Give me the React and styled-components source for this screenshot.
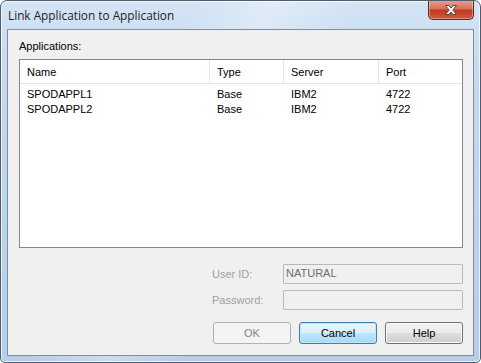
import { styled, createGlobalStyle } from 'styled-components';

const GlobalStyle = createGlobalStyle`
  html, body {
    margin: 0;
    padding: 0;
    background: #ffffff;
  }
  * {
    box-sizing: border-box;
  }
`;

const columns = [
  { key: 'name', label: 'Name', width: 190 },
  { key: 'type', label: 'Type', width: 74 },
  { key: 'server', label: 'Server', width: 95 },
  { key: 'port', label: 'Port', width: 0 },
];

const rows = [
  { name: 'SPODAPPL1', type: 'Base', server: 'IBM2', port: '4722' },
  { name: 'SPODAPPL2', type: 'Base', server: 'IBM2', port: '4722' },
];

const App = () => {
  return (
    <>
      <GlobalStyle />
      <Window>
        <TitleBar>
          <Title>Link Application to Application</Title>
          <CloseButton>
            <svg width="16" height="12" viewBox="0 0 16 12">
              <path
                d="M2.5 1.5 L6 1.5 L8 4 L10 1.5 L13.5 1.5 L9.8 6 L13.5 10.5 L10 10.5 L8 8 L6 10.5 L2.5 10.5 L6.2 6 Z"
                fill="#ffffff"
                stroke="#5b4a48"
                strokeWidth="1"
                strokeLinejoin="round"
              />
            </svg>
          </CloseButton>
        </TitleBar>
        <Client>
          <Label>Applications:</Label>
          <ListView>
            <HeaderRow>
              {columns.map((c) => (
                <HeaderCell key={c.key} width={c.width}>
                  {c.label}
                </HeaderCell>
              ))}
            </HeaderRow>
            <Body>
              {rows.map((r) => (
                <Row key={r.name}>
                  {columns.map((c) => (
                    <Cell key={c.key} width={c.width}>
                      {r[c.key]}
                    </Cell>
                  ))}
                </Row>
              ))}
            </Body>
          </ListView>
          <Fields>
            <FieldRow>
              <FieldLabel>User ID:</FieldLabel>
              <Input>NATURAL</Input>
            </FieldRow>
            <FieldRow>
              <FieldLabel>Password:</FieldLabel>
              <Input />
            </FieldRow>
          </Fields>
          <Buttons>
            <Button variant="disabled">OK</Button>
            <Button variant="focused">Cancel</Button>
            <Button>Help</Button>
          </Buttons>
        </Client>
      </Window>
    </>
  );
};

export default App;

const Window = styled.div`
  width: 481px;
  height: 363px;
  display: flex;
  flex-direction: column;
  border: 1px solid #4f5d6d;
  border-radius: 7px 7px 5px 5px;
  background:
    linear-gradient(115deg, rgba(255, 255, 255, 0) 30%, rgba(255, 255, 255, 0.3) 42%, rgba(255, 255, 255, 0) 55%),
    linear-gradient(180deg, #d3e4f5 0%, #c2d8ef 25%, #b5ceea 100%);
  box-shadow: inset 0 0 0 1px rgba(255, 255, 255, 0.7);
  padding: 0 6px 6px 6px;
  overflow: hidden;
`;

const TitleBar = styled.div`
  height: 28px;
  display: flex;
  align-items: flex-start;
  flex-shrink: 0;
`;

const Title = styled.span`
  font-family: 'Open Sans', 'Liberation Sans', sans-serif;
  font-size: 11.8px;
  color: #1e1e1e;
  margin: 6px 0 0 1px;
`;

const CloseButton = styled.div`
  margin-left: auto;
  width: 46px;
  height: 20px;
  margin-top: -1px;
  display: flex;
  align-items: center;
  justify-content: center;
  border: 1px solid #5a2a24;
  border-top: none;
  border-radius: 0 0 5px 5px;
  background: linear-gradient(180deg, #e8a395 0%, #d7705d 45%, #c2381f 55%, #cf5a3f 100%);
  box-shadow: inset 0 0 0 1px rgba(255, 255, 255, 0.35);
`;

const Client = styled.div`
  flex: 1;
  display: flex;
  flex-direction: column;
  background: #f0f0f0;
  border: 1px solid #838c98;
  padding: 10px 10px 11px 11px;
  font-family: 'Liberation Sans', Arial, sans-serif;
  font-size: 11px;
  color: #000000;
`;

const Label = styled.div`
  height: 13px;
  line-height: 13px;
  margin-bottom: 6px;
`;

const ListView = styled.div`
  height: 189px;
  background: #ffffff;
  border: 1px solid #828790;
  display: flex;
  flex-direction: column;
`;

const HeaderRow = styled.div`
  display: flex;
  height: 24px;
  border-bottom: 1px solid #e5e5e5;
`;

const HeaderCell = styled.div`
  ${({ width }) => (width ? `width: ${width}px; flex-shrink: 0;` : 'flex: 1;')}
  padding-left: 7px;
  display: flex;
  align-items: center;
  border-right: ${({ width }) => (width ? '1px solid #e5e5e5' : 'none')};
  height: 23px;
`;

const Body = styled.div`
  padding-top: 3px;
`;

const Row = styled.div`
  display: flex;
  height: 15px;
  line-height: 15px;
`;

const Cell = styled.div`
  ${({ width }) => (width ? `width: ${width}px; flex-shrink: 0;` : 'flex: 1;')}
  padding-left: 7px;
`;

const Fields = styled.div`
  display: flex;
  flex-direction: column;
  gap: 6px;
  margin-top: 16px;
  padding-left: 193px;
`;

const FieldRow = styled.div`
  display: flex;
  align-items: center;
  height: 20px;
`;

const FieldLabel = styled.div`
  width: 71px;
  color: #a0a0a0;
  padding-bottom: 1px;
`;

const Input = styled.div`
  flex: 1;
  height: 20px;
  border: 1px solid #b7b9bd;
  border-radius: 1px;
  background: #f0f0f0;
  color: #6d6d6d;
  padding-left: 2px;
  line-height: 17px;
`;

const Buttons = styled.div`
  display: flex;
  justify-content: flex-end;
  gap: 8px;
  margin-top: 12px;
`;

const buttonStyles = {
  disabled: `
    border-color: #adb2b5;
    background: #f4f4f4;
    color: #838383;
  `,
  focused: `
    border-color: #3c7fb1;
    background: linear-gradient(180deg, #eaf6fd 0%, #d9f0fc 50%, #bee6fd 51%, #a7d9f5 100%);
    box-shadow: inset 0 0 0 1px #c4e5f6;
  `,
  normal: `
    border-color: #707070;
    background: linear-gradient(180deg, #f2f2f2 0%, #ebebeb 50%, #dddddd 51%, #cfcfcf 100%);
    box-shadow: inset 0 0 0 1px #fcfcfc;
  `,
};

const Button = styled.div`
  width: 78px;
  height: 22px;
  display: flex;
  align-items: center;
  justify-content: center;
  border: 1px solid;
  border-radius: 3px;
  ${({ variant }) => buttonStyles[variant || 'normal']}
`;
